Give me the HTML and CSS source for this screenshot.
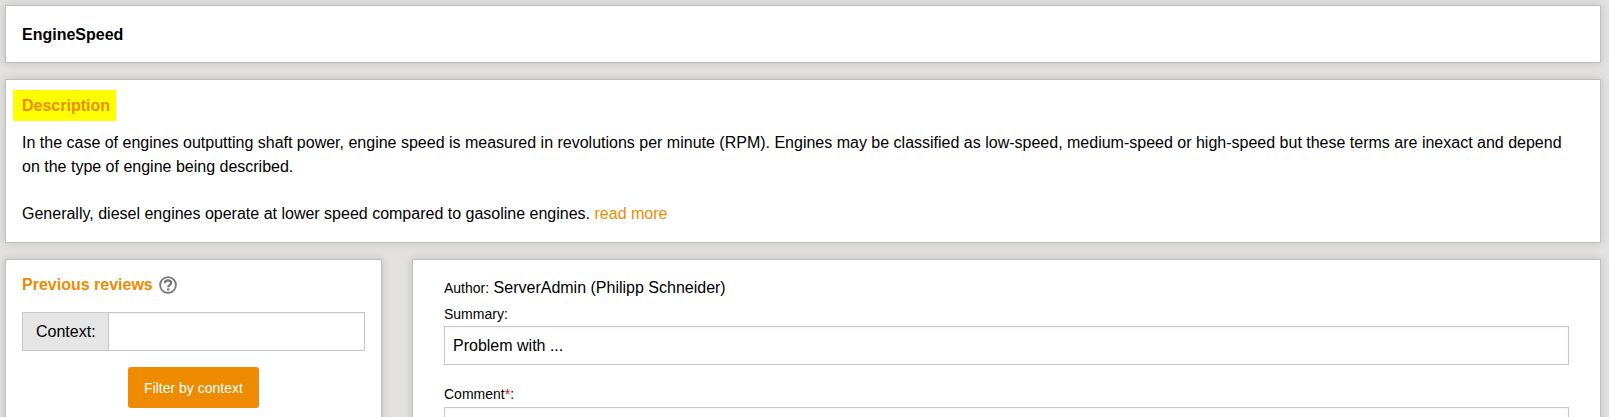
FILE: index.html
```html
<!DOCTYPE html>
<html lang="en">
<head>
<meta charset="utf-8">
<title>EngineSpeed</title>
<link rel="stylesheet" href="styles.css">
</head>
<body>
<main class="page">
  <section class="panel title-panel"><h1 class="title">EngineSpeed</h1></section>
  <section class="panel desc-panel">
    <h2 class="desc-heading">Description</h2>
    <p class="desc-text">In the case of engines outputting shaft power, engine speed is measured in revolutions per minute (RPM). Engines may be classified as low-speed, medium-speed or high-speed but these terms are inexact and depend on the type of engine being described.</p>
    <p class="desc-text desc-last">Generally, diesel engines operate at lower speed compared to gasoline engines. <a class="more" href="#">read more</a></p>
  </section>
  <div class="columns">
    <aside class="panel side">
      <h2 class="side-heading">Previous reviews
        <svg class="help" viewBox="0 0 18 18" width="18" height="18" aria-hidden="true">
          <circle cx="9" cy="9" r="7.9" fill="none" stroke="#777" stroke-width="1.8"/>
          <path d="M5.9 7.2c0-1.9 1.4-2.9 3.1-2.9 1.8 0 3.1 1.1 3.1 2.6 0 2.3-2.9 2.2-2.9 4.3" fill="none" stroke="#777" stroke-width="2.2"/>
          <rect x="8" y="12.4" width="2.4" height="2.2" fill="#777"/>
        </svg>
      </h2>
      <div class="input-group">
        <label class="addon" for="ctx">Context:</label>
        <input class="group-input" id="ctx" type="text">
      </div>
      <div class="btn-row"><button class="btn" type="button">Filter by context</button></div>
    </aside>
    <section class="panel form">
      <div class="author"><span class="small">Author:</span> ServerAdmin (Philipp Schneider)</div>
      <label class="small label" for="sum">Summary:</label>
      <input class="field" id="sum" type="text" value="Problem with ...">
      <label class="small label comment-label" for="com">Comment<span class="req">*</span>:</label>
      <textarea class="field area" id="com"></textarea>
    </section>
  </div>
</main>
</body>
</html>
```
FILE: styles.css
```css
* { box-sizing: border-box; }
html, body { margin: 0; height: 100%; overflow: hidden; }
body {
  background: #e3e1df;
  color: #000;
  font-family: "Liberation Sans", Arial, sans-serif;
  font-size: 16px;
}
.page {
  height: 417px;
  overflow: hidden;
  padding: 5px 8px 0 5px;
  display: flex;
  flex-direction: column;
  gap: 16px;
}
.panel {
  background: #fff;
  border: 1px solid #bfbfbf;
  box-shadow: 0 0 8px rgba(0, 0, 0, .15);
}
.title-panel { height: 58px; padding: 1px 16px 0; display: flex; align-items: center; flex: none; }
.title { margin: 0; font-size: 16px; font-weight: 700; line-height: 24px; }
.desc-panel { flex: none; height: 164px; padding: 10px 30px 0 16px; }
.desc-heading {
  margin: 0 0 10px -9px;
  width: 103px;
  height: 31px;
  padding-left: 9px;
  background: #ff0;
  color: #ee8b00;
  font-size: 16px;
  font-weight: 700;
  line-height: 31px;
}
.desc-text { margin: 0 0 23px; line-height: 24px; }
.desc-last { margin: 0; }
.more { color: #ee8b00; text-decoration: none; }
.columns { display: flex; gap: 30px; align-items: flex-start; flex: none; }
.side { flex: none; width: 377px; height: 300px; padding: 14px 16px 0; }
.side-heading {
  margin: 0 0 16px;
  display: flex;
  align-items: center;
  gap: 6px;
  height: 22px;
  color: #ee8b00;
  font-size: 16px;
  font-weight: 700;
}
.help { flex: none; }
.input-group { display: flex; height: 39px; border: 1px solid #c8c8c8; }
.addon {
  flex: none;
  width: 86px;
  background: #e5e5e5;
  border-right: 1px solid #c8c8c8;
  padding-left: 13px;
  line-height: 37px;
}
.group-input { flex: 1; min-width: 0; border: 0; outline: 0; padding: 0 8px; font: inherit; box-shadow: inset 0 1px 2px rgba(0, 0, 0, .05); }
.btn-row { display: flex; justify-content: center; margin-top: 16px; }
.btn {
  width: 131px;
  height: 41px;
  border: 0;
  border-radius: 3px;
  background: #ee8b00;
  color: #fff;
  font: 14px "Liberation Sans", Arial, sans-serif;
}
.form { flex: 1; min-width: 0; height: 300px; padding: 18px 31px 0 31px; }
.author { line-height: 20px; margin-bottom: 6px; }
.small { font-size: 14px; }
.label { display: block; line-height: 20px; margin-bottom: 2px; }
.field {
  display: block;
  width: 100%;
  height: 39px;
  border: 1px solid #c8c8c8;
  outline: 0;
  padding: 0 8px;
  font: 16px "Liberation Sans", Arial, sans-serif;
  color: #000;
  background: #fff;
  box-shadow: inset 0 1px 2px rgba(0, 0, 0, .05);
}
.comment-label { margin: 19px 0 3px; }
.area { height: 120px; resize: none; }
.req { color: #f00; }
```
